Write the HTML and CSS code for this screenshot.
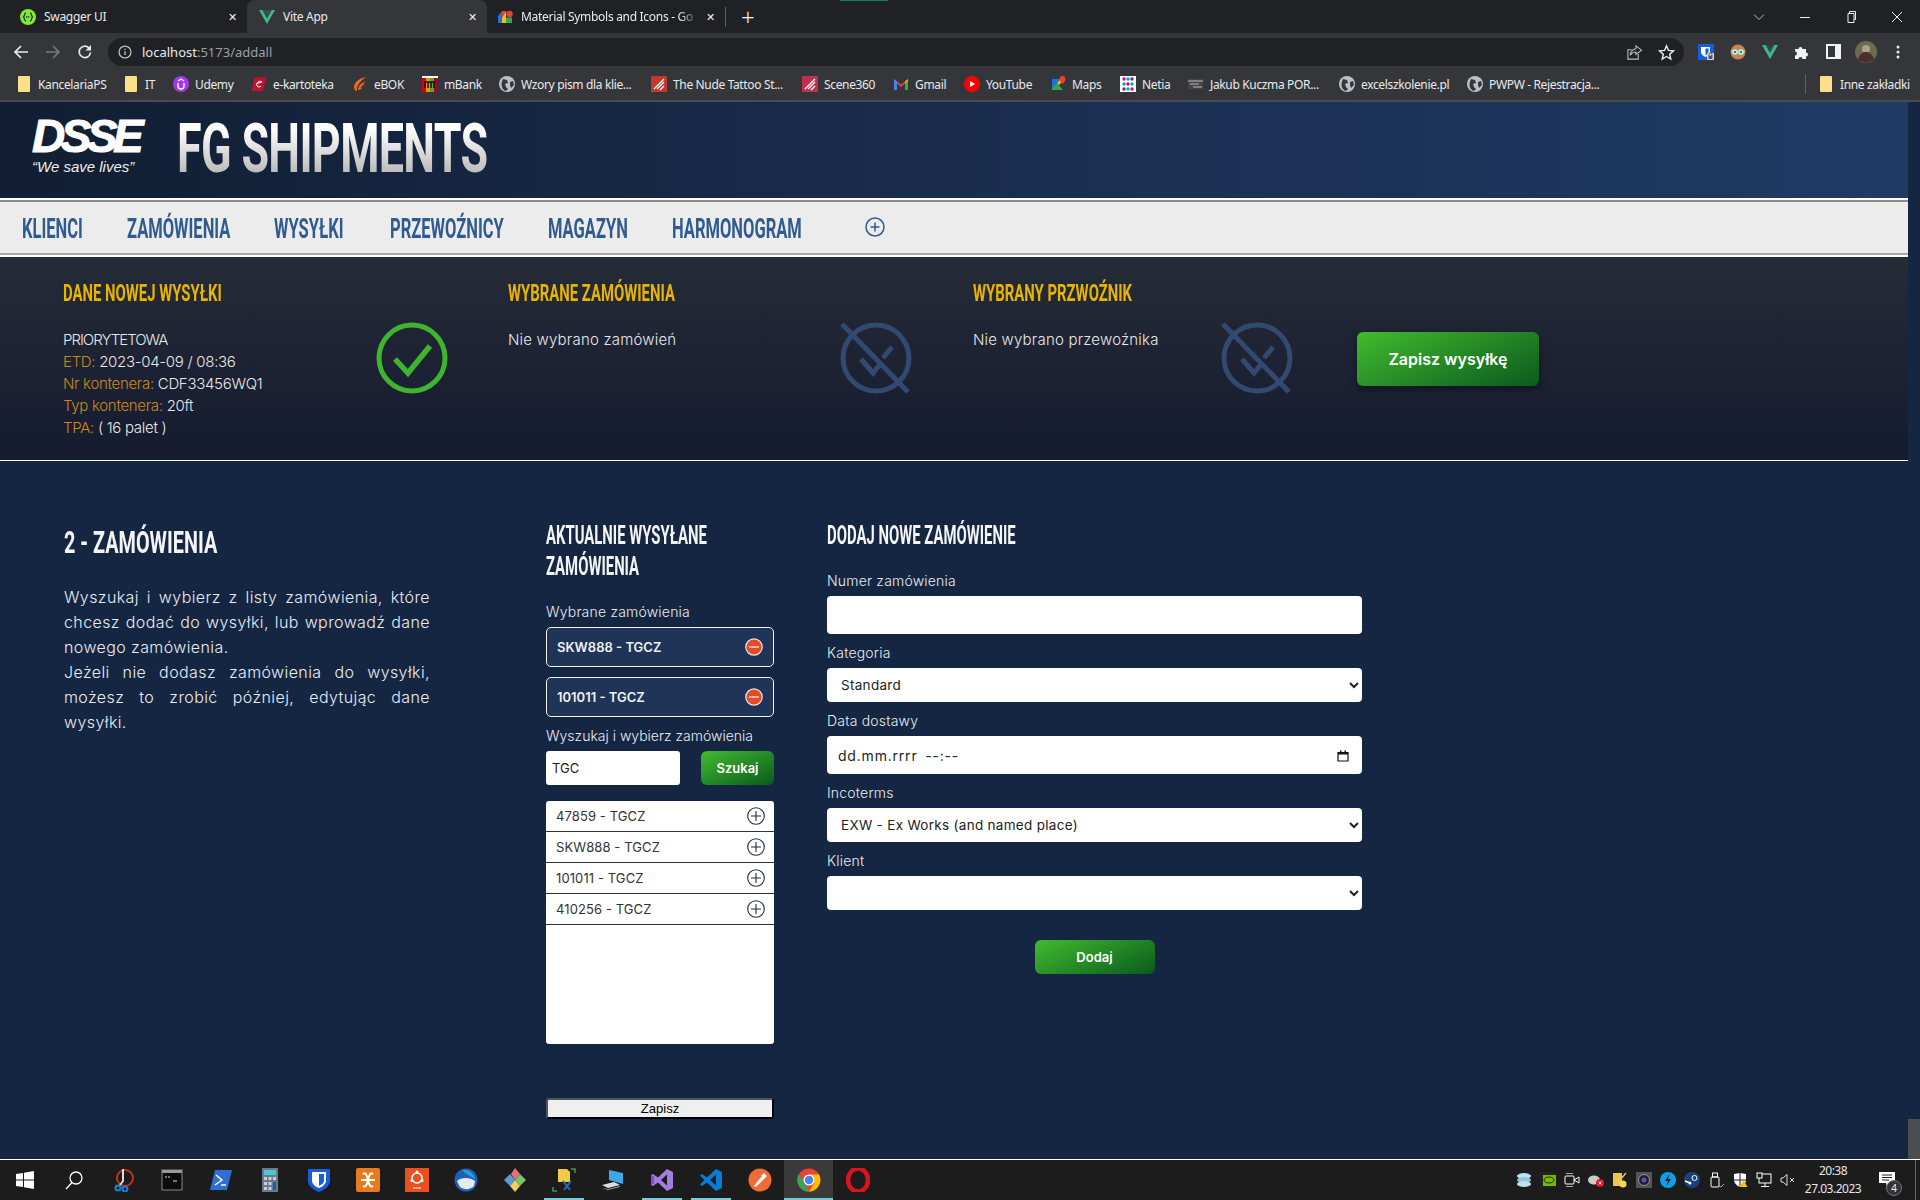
FILE: index.html
```html
<!DOCTYPE html>
<html lang="pl">
<head>
    <meta charset="UTF-8">
    <title>Vite App</title>
    <link rel="stylesheet" href="styles.css">
</head>
<body>

    <!-- browser: tabs -->
    <div class="tabstrip">
        <div class="tab">
            <svg class="fav" viewBox="0 0 16 16"><circle cx="8" cy="8" r="8" fill="#85ea2d"/><path d="M6 4c-2 0-1 3-2.500 4C5 9 4 12 6 12M10 4c2 0 1 3 2.500 4C11 9 12 12 10 12" fill="none" stroke="#173647" stroke-width="1.300"/><path d="M6 8h4" stroke="#173647" stroke-width="1.500" stroke-dasharray="1.200 .7"/></svg>
            <span class="tab-title">Swagger UI</span>
            <span class="tab-x">✕</span>
        </div>
        <div class="tab tab-active">
            <svg class="fav" viewBox="0 0 16 16"><path d="M0 1h6.400L8 4l1.600-3H16L8 15z" fill="#41b883"/><path d="M3.200 1h3.200L8 4l1.600-3h3.200L8 9.500z" fill="#35495e"/></svg>
            <span class="tab-title">Vite App</span>
            <span class="tab-x">✕</span>
        </div>
        <div class="tab tab-last">
            <svg class="fav" viewBox="0 0 16 16"><path d="M1 7l4-5v12H1z" fill="#1a73e8"/><path d="M5 2h4l-4 7z" fill="#ea4335"/><path d="M5 14V9l4-7v12z" fill="#fbbc04"/><circle cx="12.500" cy="5" r="3.200" fill="#ea4335"/><path d="M9 8.500h6V14H9z" fill="#34a853"/></svg>
            <span class="tab-title tab-fade">Material Symbols and Icons - Go</span>
            <span class="tab-x">✕</span>
        </div>
        <span class="tab-sep"></span>
        <span class="tab-new">+</span>
        <span class="tab-mark"></span>
        <div class="win-btns">
            <svg class="win-ico" viewBox="0 0 12 12"><path d="M1 3.500l5 5 5-5" fill="none" stroke="#bbb"/></svg>
            <svg class="win-ico" viewBox="0 0 12 12"><path d="M1 6.500h10" stroke="#eee"/></svg>
            <svg class="win-ico" viewBox="0 0 12 12"><path d="M3 2.500h6v9H3zM4.500 2.500V.5H10.500v8H9" fill="none" stroke="#eee"/></svg>
            <svg class="win-ico" viewBox="0 0 12 12"><path d="M1 1l10 10M11 1L1 11" stroke="#eee"/></svg>
        </div>
    </div>

    <!-- browser: address bar -->
    <div class="toolbar">
        <div class="nav-btns">
            <svg class="tool-ico" viewBox="0 0 16 16"><path d="M15 8H2M8 2L2 8l6 6" fill="none" stroke="#e8eaed" stroke-width="1.700"/></svg>
            <svg class="tool-ico" viewBox="0 0 16 16"><path d="M1 8h13M8 2l6 6-6 6" fill="none" stroke="#77797d" stroke-width="1.700"/></svg>
            <svg class="tool-ico" viewBox="0 0 16 16"><path d="M13.500 8.500A5.700 5.700 0 1 1 11.800 3.800" fill="none" stroke="#e8eaed" stroke-width="1.700"/><path d="M14 1v5.500H8.500z" fill="#e8eaed"/></svg>
        </div>
        <div class="omnibox">
            <svg class="omni-info" viewBox="0 0 16 16"><circle cx="8" cy="8" r="6.800" fill="none" stroke="#bdc1c6" stroke-width="1.400"/><path d="M8 7v4.500M8 4.300v1.500" stroke="#bdc1c6" stroke-width="1.500"/></svg>
            <span class="url">localhost<span class="url-dim">:5173/addall</span></span>
            <svg class="omni-act" viewBox="0 0 18 18"><path d="M13 10.500V16H2V6h4" fill="none" stroke="#bdc1c6" stroke-width="1.100"/><path d="M10.500 2l6 4.500-6 4.500V8.500C8 8.500 6 9.500 4.500 12c.3-4 2.500-6.500 6-7z" fill="none" stroke="#bdc1c6" stroke-width="1.100"/></svg>
            <svg class="omni-act" viewBox="0 0 18 18"><path d="M9 2l2.100 4.800 5.200.5-3.900 3.500 1.100 5.100L9 13.200 4.500 15.900l1.100-5.100-3.900-3.500 5.200-.5z" fill="none" stroke="#e8eaed" stroke-width="1.500"/></svg>
        </div>
        <div class="ext-btns">
            <svg class="ext" viewBox="0 0 16 16"><rect width="16" height="16" fill="#175ddc"/><path d="M3 3h9v5c0 2.500-2.500 4-4.500 5C5.500 12 3 10.500 3 8z" fill="#fff"/><path d="M7.500 4.500H10.500v3.500c0 1.500-1.500 2.500-3 3.300z" fill="#175ddc"/><rect x="9" y="9" width="7" height="7" rx="1" fill="#d8dadd"/><path d="M11 10.500a1.500 1.500 0 0 1 3 0V12h-3z" fill="none" stroke="#555"/><rect x="10.500" y="12" width="4" height="3" fill="#555"/></svg>
            <svg class="ext" viewBox="0 0 16 16"><circle cx="8" cy="8" r="7.500" fill="#c9854f"/><path d="M1 7h14" stroke="#7fb" stroke-width="1"/><circle cx="5" cy="8" r="2.600" fill="#cfe9ee" stroke="#8fd" stroke-width=".6"/><circle cx="11" cy="8" r="2.600" fill="#cfe9ee" stroke="#8fd" stroke-width=".6"/><circle cx="5" cy="8" r="1" fill="#345"/><circle cx="11" cy="8" r="1" fill="#345"/></svg>
            <svg class="ext" viewBox="0 0 16 16"><path d="M0 1h4.500L8 7.500 11.500 1H16L8 15z" fill="#41b883"/><path d="M3.500 1h2.500L8 4.500 10 1h2.500L8 9z" fill="#35495e"/></svg>
            <svg class="ext" viewBox="0 0 16 16"><path d="M1 5h3.500a2 2 0 1 1 4 0H12v3.500a2 2 0 1 1 0 4V15H8.500a2 2 0 1 0-4 0H1v-3.500a2 2 0 1 0 0-4z" fill="#f1f3f4"/></svg>
            <svg class="ext" viewBox="0 0 16 16"><rect width="15" height="15" fill="#f1f3f4"/><rect x="2" y="2" width="7" height="11" fill="#35363a"/></svg>
            <svg class="ext ext-avatar" viewBox="0 0 22 22"><circle cx="11" cy="11" r="11" fill="#6d6a4f"/><circle cx="11" cy="8" r="4" fill="#a8a38b"/><path d="M3 19c1-6 5-8 8-8s7 2 8 8l-8 3z" fill="#4a2f2a"/></svg>
            <svg class="ext" viewBox="0 0 16 16"><circle cx="8" cy="3" r="1.500" fill="#e8eaed"/><circle cx="8" cy="8" r="1.500" fill="#e8eaed"/><circle cx="8" cy="13" r="1.500" fill="#e8eaed"/></svg>
        </div>
    </div>

    <!-- browser: bookmarks -->
    <div class="bookmarks">
        <span class="bm"><i class="folder"></i>KancelariaPS</span>
        <span class="bm"><i class="folder"></i>IT</span>
        <span class="bm"><svg class="bm-ico" viewBox="0 0 16 16"><circle cx="8" cy="8" r="8" fill="#a435f0"/><path d="M5 7v3a3 3 0 0 0 6 0V7M5 5l3-2 3 2" fill="none" stroke="#fff" stroke-width="1.400"/></svg>Udemy</span>
        <span class="bm"><svg class="bm-ico" viewBox="0 0 16 16"><path d="M3 2l12-1-3 14H1z" fill="#c8102e"/><path d="M11 6c-3-2-6 1-5 4 1 1.500 3 1 4 0M5.500 7.500L11 6" fill="none" stroke="#fff"/></svg>e-kartoteka</span>
        <span class="bm"><svg class="bm-ico" viewBox="0 0 16 16"><path d="M14 1C8 2 2 6 2 11c0 2 1 4 3 4-1-4 2-9 9-14zM14 5C9 7 6 10 6 14c2 0 3-1 4-2l-2-.5 3-1-2-.5 4-2-2-.2z" fill="#ec6a1c"/></svg>eBOK</span>
        <span class="bm"><svg class="bm-ico" viewBox="0 0 16 16"><rect width="16" height="16" fill="#fff"/><rect y="2" width="4" height="14" fill="#d6001c"/><rect x="4" y="2" width="4" height="14" fill="#f39200"/><rect x="8" y="2" width="4" height="14" fill="#5ba829"/><rect x="12" y="2" width="4" height="14" fill="#a8002b"/><path d="M3 12V6h3v6M6 6h3v6M9 6h3v6" fill="none" stroke="#111" stroke-width="1.500"/></svg>mBank</span>
        <span class="bm"><svg class="bm-ico" viewBox="0 0 16 16"><circle cx="8" cy="8" r="8" fill="#bdc1c6"/><path d="M4 3l4 1 1 3-3 1 1 3 2 2-2 2C3 14 1 9 4 3zM11 6l3-1 1 4-3 3-1-3z" fill="#35363a"/></svg>Wzory pism dla klie...</span>
        <span class="bm"><svg class="bm-ico" viewBox="0 0 16 16"><rect width="16" height="16" fill="#c0392b"/><path d="M3 13L13 3M6 13l7-7M9 14l4-4" stroke="#fff" stroke-width="1.300"/></svg>The Nude Tattoo St...</span>
        <span class="bm"><svg class="bm-ico" viewBox="0 0 16 16"><rect width="16" height="16" fill="#c0304f"/><path d="M3 13L13 3M6 13l7-7M9 14l4-4" stroke="#fff" stroke-width="1.300"/></svg>Scene360</span>
        <span class="bm"><svg class="bm-ico" viewBox="0 0 16 16"><path d="M1 14V3l7 5.500L15 3v11h-3V7.500L8 11 4 7.500V14z" fill="#ea4335"/><path d="M1 14V3l3 2.500V14z" fill="#4285f4"/><path d="M15 14V3l-3 2.500V14z" fill="#34a853"/><path d="M12 5.500L15 3v2l-3 2.500z" fill="#fbbc04"/></svg>Gmail</span>
        <span class="bm"><svg class="bm-ico" viewBox="0 0 16 16"><circle cx="8" cy="8" r="8" fill="#f00"/><path d="M6 5l5 3-5 3z" fill="#fff"/></svg>YouTube</span>
        <span class="bm"><svg class="bm-ico" viewBox="0 0 16 16"><path d="M2 3h9l-9 9z" fill="#1a73e8"/><path d="M2 12l5-5 6 7H2z" fill="#34a853"/><path d="M7 7l4-4v4l-2 2z" fill="#fbbc04"/><path d="M12.500 0a3 3 0 0 1 3 3c0 2-3 5-3 5s-3-3-3-5a3 3 0 0 1 3-3z" fill="#ea4335"/></svg>Maps</span>
        <span class="bm"><svg class="bm-ico" viewBox="0 0 16 16"><rect width="16" height="16" fill="#fff"/><circle cx="4" cy="3" r="1.700" fill="#e6007e"/><circle cx="8" cy="3" r="1.700" fill="#00a0e3"/><circle cx="12" cy="3" r="1.700" fill="#5c2d91"/><circle cx="4" cy="8" r="1.700" fill="#00a0e3"/><circle cx="8" cy="8" r="1.700" fill="#e6007e"/><circle cx="12" cy="8" r="1.700" fill="#00b2a9"/><circle cx="4" cy="13" r="1.700" fill="#5c2d91"/><circle cx="8" cy="13" r="1.700" fill="#00b2a9"/><circle cx="12" cy="13" r="1.700" fill="#e6007e"/></svg>Netia</span>
        <span class="bm"><svg class="bm-ico" viewBox="0 0 16 16"><rect y="3" width="15" height="10" fill="#444"/><path d="M0 5h15M2 8h9M5 11h9" stroke="#bbb"/></svg>Jakub Kuczma POR...</span>
        <span class="bm"><svg class="bm-ico" viewBox="0 0 16 16"><circle cx="8" cy="8" r="8" fill="#bdc1c6"/><path d="M4 3l4 1 1 3-3 1 1 3 2 2-2 2C3 14 1 9 4 3zM11 6l3-1 1 4-3 3-1-3z" fill="#35363a"/></svg>excelszkolenie.pl</span>
        <span class="bm"><svg class="bm-ico" viewBox="0 0 16 16"><circle cx="8" cy="8" r="8" fill="#bdc1c6"/><path d="M4 3l4 1 1 3-3 1 1 3 2 2-2 2C3 14 1 9 4 3zM11 6l3-1 1 4-3 3-1-3z" fill="#35363a"/></svg>PWPW - Rejestracja...</span>
        <span class="bm-sep"></span>
        <span class="bm"><i class="folder"></i>Inne zakładki</span>
    </div>

    <div class="viewport">
        <div class="app">
            <header class="brand">
                <div class="logo">
                    <span class="logo-mark">DSSE</span>
                    <span class="logo-sub">“We save lives”</span>
                </div>
                <h1 class="brand-title"><span class="squeeze">FG SHIPMENTS</span></h1>
            </header>

            <nav class="menu">
                <a class="squeeze">KLIENCI</a>
                <a class="squeeze">ZAMÓWIENIA</a>
                <a class="squeeze">WYSYŁKI</a>
                <a class="squeeze">PRZEWOŹNICY</a>
                <a class="squeeze">MAGAZYN</a>
                <a class="squeeze">HARMONOGRAM</a>
                <svg class="menu-plus" viewBox="0 0 20 20"><circle cx="10" cy="10" r="9" fill="none" stroke="#2f5a92" stroke-width="1.500"/><path d="M10 5.500v9M5.500 10h9" stroke="#2f5a92" stroke-width="1.500"/></svg>
            </nav>

            <section class="summary">
                <div class="sum-col">
                    <h3 class="sum-title"><span class="squeeze">DANE NOWEJ WYSYŁKI</span></h3>
                    <p class="sum-text sum-upper">PRIORYTETOWA</p>
                    <p class="sum-text"><em>ETD:</em> 2023-04-09 / 08:36</p>
                    <p class="sum-text"><em>Nr kontenera:</em> CDF33456WQ1</p>
                    <p class="sum-text"><em>Typ kontenera:</em> 20ft</p>
                    <p class="sum-text"><em>TPA:</em> ( 16 palet )</p>
                </div>
                <svg class="sum-ico" viewBox="0 0 72 72"><circle cx="36" cy="36" r="33" fill="none" stroke="#3fb52f" stroke-width="5"/><path d="M19 37l13 14 22-27" fill="none" stroke="#3fb52f" stroke-width="5.500"/></svg>
                <div class="sum-col">
                    <h3 class="sum-title"><span class="squeeze">WYBRANE ZAMÓWIENIA</span></h3>
                    <p class="sum-text sum-note">Nie wybrano zamówień</p>
                </div>
                <svg class="sum-ico" viewBox="0 0 72 72"><circle cx="36" cy="36" r="33" fill="none" stroke="#324a70" stroke-width="5"/><path d="M21 37l12 14 8-10M43 36l9-11" fill="none" stroke="#324a70" stroke-width="5"/><path d="M2 2l66 68" fill="none" stroke="#324a70" stroke-width="5"/></svg>
                <div class="sum-col">
                    <h3 class="sum-title"><span class="squeeze">WYBRANY PRZWOŹNIK</span></h3>
                    <p class="sum-text sum-note">Nie wybrano przewoźnika</p>
                </div>
                <svg class="sum-ico" viewBox="0 0 72 72"><circle cx="36" cy="36" r="33" fill="none" stroke="#324a70" stroke-width="5"/><path d="M21 37l12 14 8-10M43 36l9-11" fill="none" stroke="#324a70" stroke-width="5"/><path d="M2 2l66 68" fill="none" stroke="#324a70" stroke-width="5"/></svg>
                <button class="btn btn-save">Zapisz wysyłkę</button>
            </section>

            <main class="content">
                <div class="col-intro">
                    <h2 class="intro-title"><span class="squeeze">2 - ZAMÓWIENIA</span></h2>
                    <p class="intro-text">
                        <span class="intro-line">Wyszukaj i wybierz z listy zamówienia, które</span>
                        <span class="intro-line">chcesz dodać do wysyłki, lub wprowadź dane</span>
                        nowego zamówienia.<br>
                        <span class="intro-line">Jeżeli nie dodasz zamówienia do wysyłki,</span>
                        <span class="intro-line">możesz to zrobić później, edytując dane</span>
                        wysyłki.
                    </p>
                </div>

                <div class="col-orders">
                    <h3 class="col-title"><span class="squeeze">AKTUALNIE WYSYŁANE</span><br><span class="squeeze">ZAMÓWIENIA</span></h3>
                    <label class="field-label label-picked">Wybrane zamówienia</label>
                    <div class="picked">
                        <span>SKW888 - TGCZ</span>
                        <svg class="ico-minus" viewBox="0 0 18 18"><circle cx="9" cy="9" r="8.200" fill="#e64a26" stroke="#e8e8e8" stroke-width="1.200"/><path d="M4 9h10" stroke="#fff" stroke-width="1.200"/></svg>
                    </div>
                    <div class="picked">
                        <span>101011 - TGCZ</span>
                        <svg class="ico-minus" viewBox="0 0 18 18"><circle cx="9" cy="9" r="8.200" fill="#e64a26" stroke="#e8e8e8" stroke-width="1.200"/><path d="M4 9h10" stroke="#fff" stroke-width="1.200"/></svg>
                    </div>
                    <label class="field-label label-search">Wyszukaj i wybierz zamówienia</label>
                    <div class="search">
                        <input class="search-input" type="text" value="TGC">
                        <button class="btn btn-search">Szukaj</button>
                    </div>
                    <div class="results">
                        <div class="result"><span>47859 - TGCZ</span><svg class="ico-plus" viewBox="0 0 18 18"><circle cx="9" cy="9" r="8.300" fill="none" stroke="#1d2b3f" stroke-width="1.100"/><path d="M9 4v10M4 9h10" stroke="#1d2b3f" stroke-width="1.100"/></svg></div>
                        <div class="result"><span>SKW888 - TGCZ</span><svg class="ico-plus" viewBox="0 0 18 18"><circle cx="9" cy="9" r="8.300" fill="none" stroke="#1d2b3f" stroke-width="1.100"/><path d="M9 4v10M4 9h10" stroke="#1d2b3f" stroke-width="1.100"/></svg></div>
                        <div class="result"><span>101011 - TGCZ</span><svg class="ico-plus" viewBox="0 0 18 18"><circle cx="9" cy="9" r="8.300" fill="none" stroke="#1d2b3f" stroke-width="1.100"/><path d="M9 4v10M4 9h10" stroke="#1d2b3f" stroke-width="1.100"/></svg></div>
                        <div class="result"><span>410256 - TGCZ</span><svg class="ico-plus" viewBox="0 0 18 18"><circle cx="9" cy="9" r="8.300" fill="none" stroke="#1d2b3f" stroke-width="1.100"/><path d="M9 4v10M4 9h10" stroke="#1d2b3f" stroke-width="1.100"/></svg></div>
                    </div>
                    <button class="btn-plain">Zapisz</button>
                </div>

                <div class="col-form">
                    <h3 class="col-title"><span class="squeeze">DODAJ NOWE ZAMÓWIENIE</span></h3>
                    <label class="field-label label-first">Numer zamówienia</label>
                    <input class="control control-tall" type="text">
                    <label class="field-label">Kategoria</label>
                    <select class="control"><option>Standard</option></select>
                    <label class="field-label">Data dostawy</label>
                    <div class="date-wrap">
                        <input class="control control-tall control-date" type="text" value="dd.mm.rrrr --:--">
                        <svg class="date-ico" viewBox="0 0 12 12"><path d="M1 2.500h10V11H1z" fill="none" stroke="#111" stroke-width="1.200"/><path d="M1 2h10v2.500H1zM3 .5h1.500V2H3zM7.500.5H9V2H7.500z" fill="#111"/></svg>
                    </div>
                    <label class="field-label">Incoterms</label>
                    <select class="control"><option>EXW - Ex Works (and named place)</option></select>
                    <label class="field-label">Klient</label>
                    <select class="control"><option></option></select>
                    <button class="btn btn-add">Dodaj</button>
                </div>
            </main>
        </div>
        <div class="scrollbar"><div class="scroll-thumb"></div></div>
    </div>

    <!-- windows taskbar -->
    <footer class="taskbar">
        <div class="task-apps">
            <span class="task"><svg class="task-ico" viewBox="0 0 20 20"><path d="M1 4l7-1v6.500H1zM9 2.800L19 1v8.500H9zM1 10.500h7V17l-7-1zM9 10.500h10V19L9 17.200z" fill="#fff"/></svg></span>
            <span class="task"><svg class="task-ico" viewBox="0 0 20 20"><circle cx="12" cy="8" r="6" fill="none" stroke="#fff" stroke-width="1.300"/><path d="M8 12.500L2 19" stroke="#fff" stroke-width="1.300"/></svg></span>
            <span class="task"><svg class="task-ico task-lg" viewBox="0 0 24 24"><circle cx="14" cy="10" r="8" fill="none" stroke="#c8321c" stroke-width="2"/><path d="M12 1v12l-3 4" stroke="#ddd" stroke-width="2" fill="none"/><circle cx="7" cy="20" r="2.500" fill="none" stroke="#1583d8" stroke-width="2"/><circle cx="14" cy="21" r="2.500" fill="none" stroke="#1583d8" stroke-width="2"/></svg></span>
            <span class="task"><svg class="task-ico task-lg" viewBox="0 0 24 24"><rect x="2" y="2" width="20" height="20" fill="#0c0c0c" stroke="#888"/><rect x="2" y="2" width="20" height="3" fill="#999"/><path d="M5 9h2M8 9h2M13 13h4" stroke="#ddd"/></svg></span>
            <span class="task"><svg class="task-ico task-lg" viewBox="0 0 24 24"><path d="M6 2h17l-5 20H1z" fill="#2f6fd0"/><path d="M7 7l6 5-7 5M12 17h5" fill="none" stroke="#fff" stroke-width="1.500"/></svg></span>
            <span class="task"><svg class="task-ico task-lg" viewBox="0 0 24 24"><rect x="4" width="16" height="24" fill="#6b7a89"/><rect x="6" y="2" width="12" height="5" fill="#4fc3d9"/><path d="M6 9h3v3H6zM10.500 9h3v3h-3zM15 9h3v3h-3zM6 14h3v3H6zM10.500 14h3v3h-3zM6 19h3v3H6zM10.500 19h3v3h-3z" fill="#ccd"/><rect x="15" y="14" width="3" height="8" fill="#1c5fa8"/></svg></span>
            <span class="task"><svg class="task-ico task-lg" viewBox="0 0 24 24"><path d="M1 1h22v12c0 5-6 9-11 11C7 22 1 18 1 13z" fill="#175ddc"/><path d="M5 4h14v9c0 3-4 6-7 7-3-1-7-4-7-7z" fill="#fff"/><path d="M12 6h5v7c0 2-3 4-5 5z" fill="#175ddc"/></svg></span>
            <span class="task"><svg class="task-ico task-lg" viewBox="0 0 24 24"><rect width="24" height="24" rx="2" fill="#e67a1c"/><path d="M7 6c3-2 4 2 5 6s2 8 5 6M17 6c-3-2-4 2-5 6s-2 8-5 6M5 12h14" fill="none" stroke="#fff" stroke-width="2"/></svg></span>
            <span class="task"><svg class="task-ico task-lg" viewBox="0 0 24 24"><rect width="24" height="24" fill="#e9501f"/><circle cx="12" cy="10" r="5" fill="none" stroke="#fff" stroke-width="1.500"/><circle cx="12" cy="4" r="1.500" fill="#fff"/><circle cx="7" cy="12.500" r="1.500" fill="#fff"/><circle cx="17" cy="12.500" r="1.500" fill="#fff"/><path d="M8 20h8" stroke="#fff"/></svg></span>
            <span class="task"><svg class="task-ico task-lg" viewBox="0 0 24 24"><circle cx="12" cy="12" r="11.500" fill="#1b63b8"/><path d="M3 13c4-4 13-4 18 0l-1 5c-4 4-10 4-14 1z" fill="#e6ebf1"/><path d="M8 2c6-1 12 3 13 9-3-2-8-4-13-9z" fill="#2d9ae0"/></svg></span>
            <span class="task"><svg class="task-ico task-lg" viewBox="0 0 24 24"><path d="M7 6l5 6-5 6-6-6z" fill="#5b9bd5"/><path d="M17 6l6 6-6 6-5-6z" fill="#7bc36a"/><path d="M12 0l5 6-5 6-4-6z" fill="#e0737a"/><path d="M12 12l5 6-5 6-5-6z" fill="#f2cf62"/></svg></span>
            <span class="task task-on"><svg class="task-ico task-lg" viewBox="0 0 24 24"><path d="M6 1h9l3 3v10H6z" fill="#f6c945"/><path d="M11 13l7 9M19 13l-7 9" stroke="#1b70c4" stroke-width="2"/><path d="M1 19v4h4M19 1h4v4" fill="none" stroke="#3f9b4a" stroke-width="1.500"/></svg></span>
            <span class="task"><svg class="task-ico task-lg" viewBox="0 0 24 24"><path d="M8 2l14 3v11L8 12z" fill="#3da7e8"/><path d="M1 17l12-3 6 3-12 3z" fill="#ddd"/><path d="M1 20l6 2 12-3v-1L7 21z" fill="#999"/></svg></span>
            <span class="task task-on"><svg class="task-ico task-lg" viewBox="0 0 24 24"><path d="M17 1l6 3v16l-6 3-9-8.500L3 18l-2-1V7l2-1 5 3.500z" fill="#a37de0"/><path d="M17 6.500L11 12l6 5.500z" fill="#1c1c1c"/><path d="M1 7v10l3-1.500v-7z" fill="#7a55c0"/></svg></span>
            <span class="task task-on"><svg class="task-ico task-lg" viewBox="0 0 24 24"><path d="M17 1l6 3v16l-6 3-9-8.500L3 18l-2-1.500 4.500-4.500L1 7.500 3 6l5 3.500z" fill="#0a7cd6"/><path d="M17 6.500L11 12l6 5.500z" fill="#1c1c1c"/></svg></span>
            <span class="task"><svg class="task-ico task-lg" viewBox="0 0 24 24"><circle cx="12" cy="12" r="11.500" fill="#ef6c36"/><path d="M6 18l7-9 3 2-8 8zM13 8l3-3 3 3-3 3z" fill="#fff"/></svg></span>
            <span class="task task-active"><svg class="task-ico task-lg" viewBox="0 0 24 24"><circle cx="12" cy="12" r="11.500" fill="#ea4335"/><path d="M12 23.500A11.500 11.500 0 0 1 2 6l6 10.500z" fill="#34a853"/><path d="M12 6.500h10a11.500 11.500 0 0 1-10 17l5-8.500z" fill="#fbbc04"/><circle cx="12" cy="12" r="5.500" fill="#fff"/><circle cx="12" cy="12" r="4.200" fill="#4285f4"/></svg></span>
            <span class="task"><svg class="task-ico task-lg" viewBox="0 0 24 24"><ellipse cx="12" cy="12" rx="10" ry="11.500" fill="none" stroke="#d9141e" stroke-width="4.500"/></svg></span>
        </div>
        <div class="tray">
            <svg class="tray-ico" viewBox="0 0 16 16"><ellipse cx="8" cy="4" rx="7" ry="3" fill="#bfe0ee"/><ellipse cx="8" cy="8" rx="7" ry="3" fill="#8fc5dd"/><ellipse cx="8" cy="12" rx="7" ry="3" fill="#bfe0ee"/></svg>
            <svg class="tray-ico" viewBox="0 0 16 16"><rect width="16" height="16" fill="#222"/><rect x="3" y="3" width="13" height="11" fill="#76b900"/><ellipse cx="9" cy="8" rx="5" ry="3" fill="none" stroke="#222"/></svg>
            <svg class="tray-ico" viewBox="0 0 16 16"><rect x="1" y="4" width="9" height="8" rx="1" fill="none" stroke="#fff"/><path d="M10 8l5-3v6z" fill="none" stroke="#fff"/><path d="M2 1.500h7M2 14.500h7" stroke="#aaa"/></svg>
            <svg class="tray-ico" viewBox="0 0 16 16"><ellipse cx="6" cy="8" rx="6" ry="4.500" fill="#ccc"/><circle cx="12" cy="11" r="4" fill="#e81123"/><path d="M10.500 9.500l3 3M13.500 9.500l-3 3" stroke="#fff"/></svg>
            <svg class="tray-ico" viewBox="0 0 16 16"><rect x="1" y="1" width="9" height="13" fill="#e8c94d"/><path d="M14 1l-6 7" stroke="#e8c94d" stroke-width="1.500"/><circle cx="11" cy="12" r="3.500" fill="#f5d94a"/></svg>
            <svg class="tray-ico" viewBox="0 0 16 16"><rect width="16" height="16" rx="1" fill="#555"/><circle cx="8" cy="8" r="5.500" fill="#1a1a3a" stroke="#999"/><circle cx="8" cy="8" r="2.500" fill="#5a5a9a"/></svg>
            <svg class="tray-ico" viewBox="0 0 16 16"><circle cx="8" cy="8" r="8" fill="#0e9fe8"/><path d="M9.500 2L5 9h3l-1.500 5L11 7H8z" fill="#1c1c1c"/></svg>
            <svg class="tray-ico" viewBox="0 0 16 16"><circle cx="8" cy="8" r="8" fill="#16427a"/><circle cx="10.500" cy="6" r="2.500" fill="none" stroke="#fff"/><path d="M1 9l5 2" stroke="#fff" stroke-width="1.500"/><circle cx="6" cy="11" r="1.500" fill="#fff"/></svg>
            <svg class="tray-ico" viewBox="0 0 16 16"><rect x="3" y="5" width="8" height="10" rx="1" fill="none" stroke="#fff"/><rect x="4.500" y="1" width="5" height="4" fill="none" stroke="#fff"/><path d="M11 14l2 1 3-3" fill="none" stroke="#aaa"/></svg>
            <svg class="tray-ico" viewBox="0 0 16 16"><path d="M2 2l6-1 6 1v6c0 3-3 6-6 7-3-1-6-4-6-7z" fill="#fff"/><path d="M8 1v14M2 8h12" stroke="#1c1c1c"/><path d="M11.500 8l4 7h-8z" fill="#f5c400"/></svg>
            <svg class="tray-ico" viewBox="0 0 16 16"><rect x="3" y="2" width="12" height="9" fill="none" stroke="#fff"/><rect x="1" y="1" width="5" height="5" fill="#1c1c1c" stroke="#fff"/><path d="M9 11v3M5 14.500h8" stroke="#fff"/></svg>
            <svg class="tray-ico" viewBox="0 0 16 16"><path d="M1 6v4h2l4 3.500v-11L3 6z" fill="none" stroke="#ddd"/><path d="M10 6l4 4M14 6l-4 4" stroke="#ddd"/></svg>
            <div class="clock"><span>20:38</span><span>27.03.2023</span></div>
            <span class="notif">
                <svg class="notif-ico" viewBox="0 0 16 16"><path d="M0 0h16v11h-5l-3 4-1-4H0z" fill="#fff"/><path d="M3 3h10M3 5.500h10M3 8h7" stroke="#1c1c1c"/></svg>
                <span class="notif-badge">4</span>
            </span>
            <span class="tray-sep"></span>
        </div>
    </footer>

</body>
</html>
```

FILE: styles.css
```css
html, body{
    margin: 0;
    padding: 0;
    width: 1920px;
    height: 1200px;
    overflow: hidden;
    font-family: 'Inter', 'Noto Sans', sans-serif;
    background: #152642;
}

body{
    display: flex;
    flex-direction: column;
}

h1,h2,h3,p{
    margin: 0;
}

/* condensed display face: no such font installed, so the glyphs get narrowed */
.squeeze{
    display: inline-block;
    font-family: 'Roboto', sans-serif;
    font-weight: 700;
    white-space: nowrap;
    transform: scaleX(0.62);
    transform-origin: left center;
}

/* browser tabs */
.tabstrip{
    height: 33px;
    background: #202124;
    display: flex;
    align-items: stretch;
    position: relative;
    flex-shrink: 0;
    font-family: 'Noto Sans', sans-serif;
    font-size: 12px;
    letter-spacing: -.3px;
    color: #e8eaed;
}

.tab{
    width: 240px;
    padding: 0 10px 0 12px;
    box-sizing: border-box;
    display: flex;
    align-items: center;
    border-radius: 8px 8px 0 0;
}

.tab:first-child{
    width: 247px;
    padding-left: 20px;
}

.tab-last{
    width: 238px;
    padding-left: 10px;
}

.tab-active{
    background: #35363a;
}

.fav{
    width: 16px;
    height: 16px;
    margin-right: 8px;
    flex-shrink: 0;
}

.tab-title{
    flex: 1;
    white-space: nowrap;
}

.tab-fade{
    -webkit-mask-image: linear-gradient(90deg, #000 88%, transparent 100%);
    mask-image: linear-gradient(90deg, #000 88%, transparent 100%);
}

.tab-x{
    font-size: 11px;
    margin: 0 0 0 6px;
    color: #f1f3f4;
}

.tab-sep{
    width: 1px;
    height: 20px;
    background: #5f6368;
    align-self: center;
}

.tab-new{
    font-size: 24px;
    font-weight: 300;
    line-height: 33px;
    margin-left: 15px;
    color: #f1f3f4;
}

.tab-mark{
    position: absolute;
    left: 840px;
    top: 0;
    width: 48px;
    height: 1px;
    background: #0a7a6a;
}

.win-btns{
    margin-left: auto;
    display: grid;
    grid-template-columns: 46px 46px 46px 46px;
    justify-items: center;
    align-items: center;
}

.win-ico{
    width: 12px;
    height: 12px;
}

/* address bar */
.toolbar{
    height: 33px;
    background: #35363a;
    display: flex;
    align-items: flex-end;
    flex-shrink: 0;
}

.nav-btns{
    width: 108px;
    height: 28px;
    box-sizing: border-box;
    padding-left: 5px;
    display: grid;
    grid-template-columns: 32px 32px 32px;
    justify-items: center;
    align-items: center;
}

.tool-ico{
    width: 16px;
    height: 16px;
}

.omnibox{
    width: 1576px;
    height: 28px;
    background: #202124;
    border-radius: 14px;
    display: flex;
    align-items: center;
    font-family: 'Noto Sans', sans-serif;
    font-size: 13px;
    color: #e8eaed;
}

.omni-info{
    width: 14px;
    height: 14px;
    margin: 0 10px 0 10px;
}

.url{
    flex: 1;
}

.url-dim{
    color: #9aa0a6;
}

.omni-act{
    width: 17px;
    height: 17px;
    margin-right: 15px;
}

.omni-act + .omni-act{
    margin-right: 9px;
}

.ext-btns{
    height: 28px;
    flex: 1;
    box-sizing: border-box;
    padding-left: 6px;
    display: grid;
    grid-template-columns: repeat(7, 32px);
    justify-items: center;
    align-items: center;
}

.ext{
    width: 16px;
    height: 16px;
}

.ext-avatar{
    width: 22px;
    height: 22px;
}

/* bookmarks */
.bookmarks{
    height: 36px;
    background: #35363a;
    display: grid;
    grid-template-columns: 107px 50px 78px 101px 70px 77px 152px 151px 91px 71px 86px 70px 68px 151px 128px 338px 13px 101px;
    padding: 2px 0 0 16px;
    align-items: center;
    flex-shrink: 0;
    font-family: 'Noto Sans', sans-serif;
    font-size: 12px;
    letter-spacing: -.35px;
    color: #e8eaed;
    box-sizing: border-box;
    border-bottom: 2px solid #4a4b4f;
}

.bm{
    display: flex;
    align-items: center;
    white-space: nowrap;
}

.bm-ico{
    width: 16px;
    height: 16px;
    margin-right: 6px;
    flex-shrink: 0;
}

.folder{
    width: 12px;
    height: 16px;
    margin: 0 8px 0 2px;
    background: #fbe08c;
    border-radius: 1px;
    flex-shrink: 0;
}

.bm-sep{
    width: 1px;
    height: 20px;
    background: #5f6368;
}

/* page viewport */
.viewport{
    flex: 1;
    position: relative;
    min-height: 0;
}

.app{
    height: 100%;
    width: 1908px;
    display: flex;
    flex-direction: column;
}

.scrollbar{
    position: absolute;
    right: 0;
    top: 0;
    bottom: 0;
    width: 12px;
}

.scroll-thumb{
    position: absolute;
    right: 0;
    bottom: 0;
    width: 12px;
    height: 40px;
    background: #4d4e50;
}

/* app header */
.brand{
    height: 96px;
    box-sizing: border-box;
    padding-bottom: 4px;
    background: linear-gradient(90deg, #111e33 0%, #182a48 40%, #1f3a66 100%);
    display: flex;
    align-items: center;
    flex-shrink: 0;
}

.logo{
    width: 177px;
    padding-left: 32px;
    box-sizing: border-box;
    display: flex;
    flex-direction: column;
    color: #fff;
}

.logo-mark{
    font-family: 'Liberation Sans', sans-serif;
    font-weight: 700;
    font-style: italic;
    font-size: 46px;
    line-height: 38px;
    letter-spacing: -4.500px;
    -webkit-text-stroke: 1px #fff;
}

.logo-sub{
    font-family: 'Liberation Sans', sans-serif;
    font-style: italic;
    font-size: 15px;
    line-height: 24px;
    color: #eee;
}

.brand-title{
    font-size: 68px;
    line-height: 70px;
    letter-spacing: -1px;
}

.brand-title .squeeze{
    transform: scaleX(0.66);
    background: linear-gradient(180deg, #fff 20%, #b5b5b5 90%);
    -webkit-background-clip: text;
    background-clip: text;
    color: transparent;
}

.menu{
    height: 59px;
    box-sizing: border-box;
    background: #ececec;
    border-top: 2px solid #fff;
    border-bottom: 2px solid #fff;
    box-shadow: inset 0 2px 0 #8a8a8a, inset 0 -2px 0 #a8a8a8;
    display: grid;
    grid-template-columns: 105px 147px 116px 158px 124px 193px 20px;
    padding: 2px 0 0 22px;
    align-items: center;
    flex-shrink: 0;
}

.menu a{
    font-size: 28px;
    color: #2f5a92;
    transform: scaleX(0.59);
}

.menu-plus{
    width: 20px;
    height: 20px;
    margin-top: -4px;
}

/* summary strip */
.summary{
    height: 204px;
    box-sizing: border-box;
    background: linear-gradient(180deg, #262b37 0%, #151b30 100%);
    border-bottom: 1px solid #fff;
    padding: 24px 0 0 63px;
    display: grid;
    grid-template-columns: 313px 132px 332px 133px 248px 136px 182px;
    flex-shrink: 0;
    color: #e8e8e8;
}

.sum-ico{
    width: 72px;
    height: 72px;
    margin-top: 41px;
}

.sum-title{
    font-size: 24px;
    line-height: 24px;
    color: #e8b400;
    margin-bottom: 24px;
}

.sum-text{
    font-size: 15px;
    font-weight: 300;
    line-height: 22px;
    letter-spacing: -.3px;
    white-space: nowrap;
}

.sum-upper{
    letter-spacing: -1px;
}

.sum-note{
    letter-spacing: .2px;
}

.sum-text em{
    font-style: normal;
    color: #c98a1c;
}

/* green buttons */
.btn{
    border: 0;
    border-radius: 6px;
    font-family: 'Inter', sans-serif;
    font-weight: 600;
    color: #fff;
    background: linear-gradient(155deg, #42bb2e 0%, #0a5a1e 100%);
}

.btn-save{
    width: 182px;
    height: 54px;
    margin-top: 51px;
    font-size: 16px;
    box-shadow: 0 3px 8px rgba(0,0,0,.4);
}

.btn-search{
    width: 73px;
    height: 34px;
    font-size: 13px;
}

.btn-add{
    display: block;
    width: 120px;
    height: 34px;
    font-size: 13px;
    margin: 30px auto 0;
}

/* main content */
.content{
    flex: 1;
    background: #152642;
    padding: 64px 0 0 64px;
    display: grid;
    grid-template-columns: 482px 281px 535px;
    color: #e8ecf2;
}

.col-intro{
    width: 366px;
}

.col-orders{
    width: 228px;
}

.col-form{
    width: 535px;
}

.intro-title{
    font-size: 32px;
    line-height: 32px;
    margin-top: 1px;
    margin-bottom: 27px;
    color: #f4f4f4;
}

.intro-text{
    font-size: 16px;
    font-weight: 300;
    line-height: 25px;
    letter-spacing: .4px;
}

.intro-line{
    display: block;
    text-align: justify;
    text-align-last: justify;
}

.col-title{
    font-size: 25px;
    line-height: 31px;
    margin-top: -5px;
    color: #f4f4f4;
}

.col-title .squeeze{
    transform: scaleX(0.595);
}

.field-label{
    display: block;
    font-size: 14px;
    font-weight: 300;
    line-height: 20px;
    letter-spacing: .2px;
    white-space: nowrap;
}

.label-picked{
    margin-top: 20px;
    margin-bottom: 5px;
}

.label-search{
    margin-bottom: 5px;
    letter-spacing: 0;
}

.label-first{
    margin-top: 20px;
}

.picked{
    height: 40px;
    box-sizing: border-box;
    border: 1px solid #f0f0f0;
    border-radius: 5px;
    background: #203457;
    padding: 0 10px;
    margin-bottom: 10px;
    display: flex;
    align-items: center;
    justify-content: space-between;
    font-size: 13px;
    font-weight: 600;
    color: #eef1f5;
}

.picked + .field-label{
    margin-top: -1px;
}

.ico-minus{
    width: 18px;
    height: 18px;
}

.search{
    display: flex;
    justify-content: space-between;
}

.search-input{
    width: 134px;
    height: 34px;
    box-sizing: border-box;
    border: 0;
    border-radius: 3px;
    padding: 0 6px;
    font-family: 'Inter', sans-serif;
    font-size: 13px;
    color: #222;
}

.results{
    height: 243px;
    margin-top: 16px;
    background: #fff;
    border-radius: 3px;
}

.result{
    height: 31px;
    box-sizing: border-box;
    border-bottom: 1px solid #333;
    padding: 0 9px 0 10px;
    display: flex;
    align-items: center;
    justify-content: space-between;
    font-size: 13px;
    letter-spacing: .1px;
    color: #333;
}

.ico-plus{
    width: 18px;
    height: 18px;
}

.btn-plain{
    display: block;
    width: 228px;
    height: 21px;
    margin-top: 54px;
    box-sizing: border-box;
    padding: 0;
    background: #efefef;
    border: 2px outset #555;
    border-radius: 3px;
    font-family: 'Liberation Sans', sans-serif;
    font-size: 13px;
    color: #000;
}

/* form controls */
.control{
    display: block;
    width: 535px;
    height: 34px;
    box-sizing: border-box;
    border: 0;
    border-radius: 4px;
    background: #fff;
    padding: 0 10px;
    margin: 5px 0 9px;
    font-family: 'Inter', sans-serif;
    font-size: 13.500px;
    letter-spacing: .3px;
    color: #222;
}

.control-tall{
    height: 38px;
}

.date-wrap{
    position: relative;
}

.control-date{
    font-size: 14px;
    padding: 0 11px;
    letter-spacing: .8px;
    word-spacing: 3px;
}

.date-ico{
    position: absolute;
    right: 13px;
    top: 14px;
    width: 12px;
    height: 12px;
}

/* windows taskbar */
.taskbar{
    height: 41px;
    box-sizing: border-box;
    background: #1c1c1c;
    border-top: 1px solid #fff;
    display: flex;
    justify-content: space-between;
    flex-shrink: 0;
    overflow: hidden;
}

.task-apps{
    display: grid;
    grid-template-columns: repeat(18, 49px);
}

.task{
    display: flex;
    align-items: center;
    justify-content: center;
    box-sizing: border-box;
}

.task-on{
    background: linear-gradient(#76cdd8, #76cdd8) center bottom / 40px 2px no-repeat;
}

.task-active{
    background: #3a3a3a;
    box-shadow: inset 0 -2px 0 #76cdd8;
}

.task-ico{
    width: 20px;
    height: 20px;
}

.task-lg{
    width: 24px;
    height: 24px;
}

.tray{
    display: flex;
    align-items: center;
}

.tray-ico{
    width: 16px;
    height: 16px;
    margin-left: 8px;
}

.clock{
    width: 66px;
    margin: 0 9px 0 4px;
    display: flex;
    flex-direction: column;
    align-items: center;
    font-family: 'Noto Sans', sans-serif;
    font-size: 12px;
    line-height: 18px;
    letter-spacing: -.5px;
    color: #e6e6e6;
}

.notif{
    position: relative;
    width: 24px;
    height: 24px;
}

.notif-ico{
    display: block;
    width: 16px;
    height: 16px;
    margin: 4px 0 0 4px;
}

.notif-badge{
    position: absolute;
    left: 11px;
    top: 12px;
    width: 14px;
    height: 14px;
    border-radius: 50%;
    background: #333;
    border: 1px solid #777;
    color: #eee;
    font-family: 'Noto Sans', sans-serif;
    font-size: 10px;
    line-height: 14px;
    text-align: center;
}

.tray-sep{
    width: 1px;
    height: 40px;
    background: #666;
    margin: 0 4px 0 16px;
}
```
